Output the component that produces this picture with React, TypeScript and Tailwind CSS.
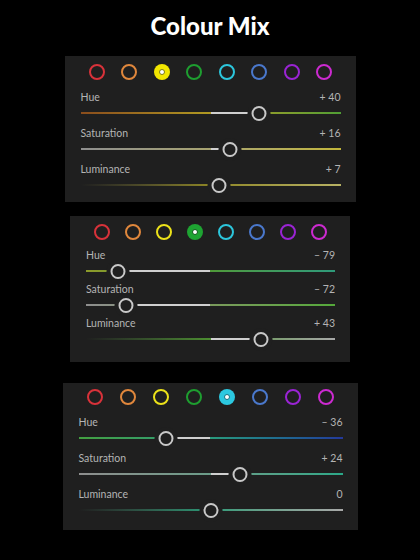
import React from 'react';

type Slider = {
    label: string;
    value: number;
    track: string;
};

type Panel = {
    width: string;
    pad: string;
    selected: number;
    gap: string;
    top: string;
    sliders: Slider[];
};

const swatches = [
    { ring: 'border-[#d8323a]', fill: 'bg-[#d8323a]', dot: 'border-[#7a1a1e]' },
    { ring: 'border-[#e0873c]', fill: 'bg-[#e0873c]', dot: 'border-[#7a4a1e]' },
    { ring: 'border-[#ece21a]', fill: 'bg-[#f2e600]', dot: 'border-[#7c7a10]' },
    { ring: 'border-[#1e9e30]', fill: 'bg-[#1ea432]', dot: 'border-[#0e5a1a]' },
    { ring: 'border-[#2cc6dc]', fill: 'bg-[#2cc8e0]', dot: 'border-[#157080]' },
    { ring: 'border-[#4a78cc]', fill: 'bg-[#4a78cc]', dot: 'border-[#23407a]' },
    { ring: 'border-[#9a24d4]', fill: 'bg-[#9a24d4]', dot: 'border-[#55127a]' },
    { ring: 'border-[#cc2ad0]', fill: 'bg-[#cc2ad0]', dot: 'border-[#701478]' },
];

const panels: Panel[] = [
    {
        width: 'w-[291px] h-[146px] mt-0',
        pad: 'pt-2 pb-2',
        selected: 2,
        gap: 'gap-1',
        top: 'mt-[11px]',
        sliders: [
            { label: 'Hue', value: 40, track: 'bg-linear-to-r from-[#8a4d1c] via-[#b09a22] to-[#4f9e34]' },
            { label: 'Saturation', value: 16, track: 'bg-linear-to-r from-[#8e8e8e] via-[#a8a470] to-[#c2b63a]' },
            { label: 'Luminance', value: 7, track: 'bg-linear-to-r from-[#1f1f1f] via-[#8e8624] to-[#b8b264]' },
        ],
    },
    {
        width: 'w-[280px] h-[146px] mt-[14px]',
        pad: 'pt-2 pb-2',
        selected: 3,
        gap: 'gap-[2px]',
        top: 'mt-[9px]',
        sliders: [
            { label: 'Hue', value: -79, track: 'bg-linear-to-r from-[#8c9a2a] via-[#4f9a38] to-[#2e9a7a]' },
            { label: 'Saturation', value: -72, track: 'bg-linear-to-r from-[#8e8e8e] via-[#7a9a5c] to-[#54a83a]' },
            { label: 'Luminance', value: 43, track: 'bg-linear-to-r from-[#1f1f1f] via-[#4c8e30] to-[#a8a8a8]' },
        ],
    },
    {
        width: 'w-[295px] h-[147px] mt-[21px]',
        pad: 'pt-[6px] pb-2',
        selected: 4,
        gap: 'gap-1',
        top: 'mt-[11px]',
        sliders: [
            { label: 'Hue', value: -36, track: 'bg-linear-to-r from-[#43a040] via-[#2a9a7c] to-[#24389a]' },
            { label: 'Saturation', value: 24, track: 'bg-linear-to-r from-[#8e8e8e] via-[#6a9c88] to-[#2aa888]' },
            { label: 'Luminance', value: 0, track: 'bg-linear-to-r from-[#1f1f1f] via-[#2a9a78] to-[#a8a8a8]' },
        ],
    },
];

const formatValue = (v: number) => (v === 0 ? '0' : v > 0 ? `+ ${v}` : `– ${Math.abs(v)}`);

const SliderRow: React.FC<{ slider: Slider }> = ({ slider }) => {
    // thumb travel is a little shorter than the track
    const pos = 50 + (slider.value / 2) * 0.94;
    const from = Math.min(50, pos);
    const to = Math.max(50, pos);

    return (
        <div className="flex flex-col">
            <div className="flex h-3 items-center justify-between text-[10.5px] leading-3 text-[#b4b4b4]">
                <span>{slider.label}</span>
                <span>{formatValue(slider.value)}</span>
            </div>
            <div className="relative h-5">
                <div className={`absolute left-0 right-0 top-[9px] h-[2px] ${slider.track}`} />
                {/* highlighted span between centre and thumb */}
                <div
                    className="absolute top-[9px] h-[2px] bg-[#cfcfcf]"
                    style={{ left: `${from}%`, width: `${to - from}%` }}
                />
                <div
                    className="absolute top-[3px] h-[15px] w-[15px] -translate-x-1/2 rounded-full border-2 border-[#c8c8c8] bg-[#1f1f1f] shadow-[0_0_0_4px_#1f1f1f]"
                    style={{ left: `${pos}%` }}
                />
            </div>
        </div>
    );
};

const ColourPanel: React.FC<{ panel: Panel }> = ({ panel }) => (
    <div className={`flex flex-col bg-[#1f1f1f] pl-4 pr-[15px] ${panel.width} ${panel.pad}`}>
        <div className="flex h-4 items-center justify-between px-2">
            {swatches.map((s, i) =>
                i === panel.selected ? (
                    <div key={i} className={`flex h-4 w-4 items-center justify-center rounded-full ${s.fill}`}>
                        <div className={`h-[6px] w-[6px] rounded-full border-[1.5px] bg-white ${s.dot}`} />
                    </div>
                ) : (
                    <div key={i} className={`h-4 w-4 rounded-full border-2 ${s.ring}`} />
                )
            )}
        </div>
        <div className={`flex flex-col ${panel.gap} ${panel.top}`}>
            {panel.sliders.map((s) => (
                <SliderRow key={s.label} slider={s} />
            ))}
        </div>
    </div>
);

export default function App() {
    return (
        <div className="flex h-[560px] w-[420px] flex-col items-center bg-black font-['Lato','Liberation_Sans',sans-serif]">
            <div className="flex h-14 justify-center pt-3">
                <h1 className="text-[24px] font-black leading-7 text-white">Colour Mix</h1>
            </div>
            {panels.map((p, i) => (
                <ColourPanel key={i} panel={p} />
            ))}
        </div>
    );
}
